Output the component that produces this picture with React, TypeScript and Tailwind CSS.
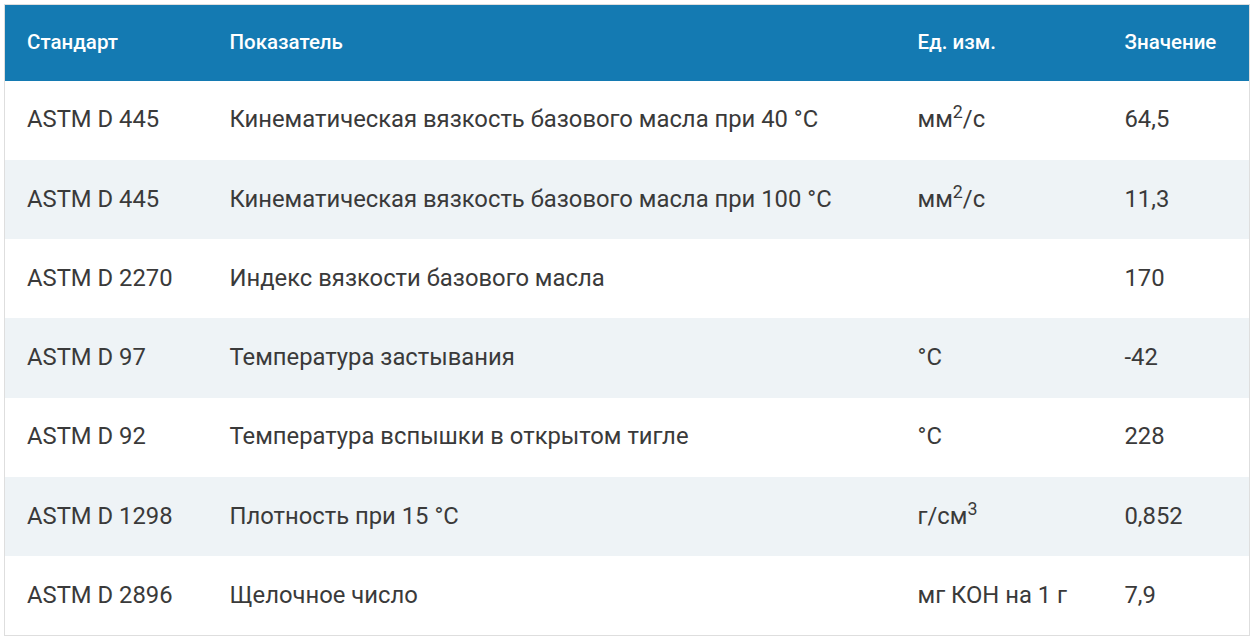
import React from 'react';

type Row = {
  standard: string;
  name: string;
  unit: React.ReactNode;
  value: string;
};

const rows: Row[] = [
  { standard: 'ASTM D 445', name: 'Кинематическая вязкость базового масла при 40 °С', unit: <>мм<sup>2</sup>/с</>, value: '64,5' },
  { standard: 'ASTM D 445', name: 'Кинематическая вязкость базового масла при 100 °С', unit: <>мм<sup>2</sup>/с</>, value: '11,3' },
  { standard: 'ASTM D 2270', name: 'Индекс вязкости базового масла', unit: '', value: '170' },
  { standard: 'ASTM D 97', name: 'Температура застывания', unit: '°С', value: '-42' },
  { standard: 'ASTM D 92', name: 'Температура вспышки в открытом тигле', unit: '°С', value: '228' },
  { standard: 'ASTM D 1298', name: 'Плотность при 15 °С', unit: <>г/см<sup>3</sup></>, value: '0,852' },
  { standard: 'ASTM D 2896', name: 'Щелочное число', unit: 'мг КОН на 1 г', value: '7,9' },
];

const App: React.FC = () => {
  return (
    <div className="bg-white p-1 font-['Roboto',sans-serif]">
      <table className="w-[1245px] border-collapse border border-[#dedede] table-fixed">
        <colgroup>
          <col className="w-[203px]" />
          <col className="w-[688px]" />
          <col className="w-[207px]" />
          <col className="w-[147px]" />
        </colgroup>
        <thead>
          <tr className="bg-[#147ab2] h-[76px]">
            <th className="text-left font-medium text-white text-[20.5px] pl-[22px]">Стандарт</th>
            <th className="text-left font-medium text-white text-[20.5px] pl-[22px]">Показатель</th>
            <th className="text-left font-medium text-white text-[20.5px] pl-[22px]">Ед. изм.</th>
            <th className="text-left font-medium text-white text-[20.5px] pl-[22px]">Значение</th>
          </tr>
        </thead>
        <tbody>
          {rows.map((r, i) => (
            <tr key={i} className={`h-[79.3px] ${i % 2 === 1 ? 'bg-[#eef3f6]' : 'bg-white'}`}>
              <td className="pl-[22px] text-[23.8px] text-[#3a3a3a]">{r.standard}</td>
              <td className="pl-[22px] text-[23.8px] text-[#3a3a3a]">{r.name}</td>
              <td className="pl-[22px] text-[23.8px] text-[#3a3a3a] whitespace-nowrap">{r.unit}</td>
              <td className="pl-[22px] text-[23.8px] text-[#3a3a3a]">{r.value}</td>
            </tr>
          ))}
        </tbody>
      </table>
    </div>
  );
};

export default App;
